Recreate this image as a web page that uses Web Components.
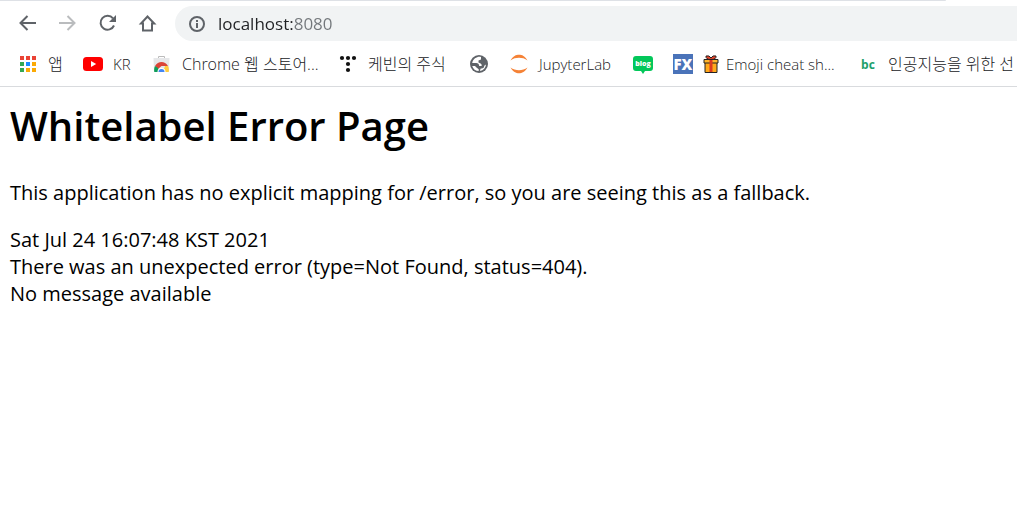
<!DOCTYPE html>
<html lang="ko">
<head>
<meta charset="utf-8">
<meta name="viewport" content="width=device-width, initial-scale=1">
<title>localhost:8080</title>
<style>
body { margin: 0; background: #fff; overflow-x: hidden; font-family: "Open Sans", "Noto Sans CJK KR", sans-serif; }
</style>
</head>
<body>
<browser-toolbar></browser-toolbar>
<bookmark-bar>
  <bookmark-item label="앱" icon="apps" lang="ko"></bookmark-item>
  <bookmark-item label="KR" icon="youtube" lang="en"></bookmark-item>
  <bookmark-item label="Chrome 웹 스토어..." icon="store" lang="ko"></bookmark-item>
  <bookmark-item label="케빈의 주식" icon="dots" lang="ko"></bookmark-item>
  <bookmark-item icon="globe"></bookmark-item>
  <bookmark-item label="JupyterLab" icon="jupyter" lang="en"></bookmark-item>
  <bookmark-item icon="blog"></bookmark-item>
  <bookmark-item icon="fx"></bookmark-item>
  <bookmark-item label="Emoji cheat sh..." icon="gift" lang="en" tight></bookmark-item>
  <bookmark-item label="인공지능을 위한 선" icon="bc" lang="ko"></bookmark-item>
</bookmark-bar>
<error-page>
  <span slot="title">Whitelabel Error Page</span>
  <span slot="summary">This application has no explicit mapping for /error, so you are seeing this as a fallback.</span>
  <div>Sat Jul 24 16:07:48 KST 2021</div>
  <div>There was an unexpected error (type=Not Found, status=404).</div>
  <div>No message available</div>
</error-page>

<script>
class BrowserToolbar extends HTMLElement {
  constructor() {
    super();
    this.attachShadow({ mode: 'open' }).innerHTML = `
<style>
:host { display: block; background: linear-gradient(#dee1e6, #dee1e6) 0 0 / 93% 1px no-repeat #fff; }
nav { display: flex; align-items: center; height: 35px; padding: 6px 0 0 16px; }
button { flex: none; width: 24px; height: 24px; margin-right: 16px; padding: 0; border: 0; background: none; color: #5f6368; }
button:disabled { color: #babcbe; }
button:last-of-type { margin-right: 15px; }
svg { display: block; }
label { flex: 1; display: flex; align-items: center; height: 35px; padding-left: 13px; gap: 12px; background: #f1f3f4; border-radius: 18px 0 0 18px; color: #5f6368; }
input { flex: 1; min-width: 0; height: 32px; padding: 0; border: 0; outline: 0; font: 17px/32px "Open Sans", sans-serif; color: #202124;
  background: linear-gradient(90deg, #202124 75px, #73777b 75px); -webkit-background-clip: text; background-clip: text; -webkit-text-fill-color: transparent; }
</style>
<nav aria-label="Navigation">
  <button aria-label="Back"><svg width="24" height="24" fill="none" stroke="currentColor" stroke-width="2"><path d="M20 11H5M11.500 4l-7 7 7 7"/></svg></button>
  <button aria-label="Forward" disabled><svg width="24" height="24" fill="none" stroke="currentColor" stroke-width="2"><path d="M3 11h15M11.500 4l7 7-7 7"/></svg></button>
  <button aria-label="Reload"><svg width="24" height="24" fill="none" stroke="currentColor" stroke-width="2"><path d="M17 6.300A7 7 0 1 0 18 13.500"/><path d="M20 3v7h-7z" fill="currentColor" stroke="none"/></svg></button>
  <button aria-label="Home"><svg width="24" height="24" fill="none" stroke="currentColor" stroke-width="2"><path d="M5 11.500h2V18.500h9V11.500h2.200L11.500 4.500z"/></svg></button>
  <label><svg width="18" height="18" fill="none" stroke="currentColor" stroke-width="2"><circle cx="9" cy="9" r="7"/><path d="M9 8v5M9 5v2"/></svg>
  <input type="text" aria-label="Address" value="localhost:8080" spellcheck="false"></label>
</nav>`;
  }
}

class BookmarkBar extends HTMLElement {
  constructor() {
    super();
    this.attachShadow({ mode: 'open' }).innerHTML = `
<style>
:host { display: grid; grid-template-columns: 65px 69px 186px 131px 40px 124px 40px 28px 157px auto; align-items: center; height: 45px; padding-left: 18px; border-bottom: 1px solid #d9dbde; overflow: hidden; }
</style><slot></slot>`;
  }
}

const dot = (x, y, c) => `<rect x="${x}" y="${y}" width="4" height="4" fill="${c}"/>`;
const ICONS = {
  apps: dot(2,2,'#ea4335')+dot(8,2,'#ea4335')+dot(14,2,'#ea4335')+dot(2,8,'#34a853')+dot(8,8,'#1a8cff')+dot(14,8,'#fbaa05')+dot(2,14,'#34a853')+dot(8,14,'#fbaa05')+dot(14,14,'#fbaa05'),
  youtube: '<rect x="0" y="3" width="20" height="14" rx="3.500" fill="#f00"/><path d="M8 7v6l5.200-3z" fill="#fff"/>',
  store: '<path d="M6.500 4V2.500h6V4" fill="none" stroke="#bbb"/><path d="M1.500 4h16l-.5 14H2z" fill="#e6e7e9"/><path d="M3 12c1.500-2.500 4-4 6.500-4s5 1.500 6.500 4H9.500L6 15z" fill="#db4437"/><path d="M3 12c-1 2-1 4-.7 6H8l-2-4z" fill="#0f9d58"/><path d="M16 12c1 2 1 4 .7 6H11l2-6z" fill="#ffcd40"/><path d="M5.500 18a4 4 0 1 1 8 0z" fill="#fff"/><path d="M6.500 18a3 3 0 1 1 6 0z" fill="#4285f4"/>',
  dots: '<g fill="#111"><circle cx="4" cy="4" r="2.100"/><circle cx="10" cy="4" r="2.100"/><circle cx="16" cy="4" r="2.100"/><circle cx="10" cy="10" r="2.100"/><circle cx="10" cy="16" r="2.100"/></g>',
  globe: '<circle cx="10" cy="10" r="9" fill="#5f6368"/><path d="M12 2.900C9 2 4 4 3.200 9h4q2.800 0 3 3h2.500q.3-2-1.500-2.800L9.500 8.500V6.500l2.500-1zM3.200 12c.8 3 3.500 5 6.500 5v-1.800L7.500 13.500 6 12zM11 17c3.500-.6 5.700-3.200 6-6.500l-1.500 1-1 2.500-3 .8z" fill="#fff"/>',
  jupyter: '<path d="M1.500 6.500C4 2 7 .8 10 .8s6 1.200 8.500 5.700C16 4.500 13 3.800 10 3.800s-6 .7-8.500 2.700zM1.500 13.500C4 18 7 19.200 10 19.200s6-1.200 8.500-5.700C16 15.500 13 16.200 10 16.200s-6-.7-8.500-2.700z" fill="#f58236"/>',
  blog: '<path d="M3 2h14q3 0 3 3v9q0 3-3 3h-5l-2 3L8 17H3q-3 0-3-3V5q0-3 3-3z" fill="#03c75a"/><text x="10" y="12" text-anchor="middle" font-family="Open Sans,sans-serif" font-size="7" font-weight="800" fill="#fff">blog</text>',
  fx: '<path d="M0 0h20v20H0z" fill="#4a73b9"/><text x="10" y="16" text-anchor="middle" font-family="Open Sans,sans-serif" font-size="15" font-weight="800" fill="#fff">FX</text>',
  gift: '<path d="M4 8h12v10.500H4z" fill="#ffa91a" stroke="#222"/><path d="M3 5.500h14V9H3z" fill="#ffb52b" stroke="#222"/><path d="M8.500 6h3v12h-3z" fill="#db3b21"/><path d="M10 5.500Q4.500 5.500 5 2q3.500-1 5 2 1.500-3 5-2 .5 3.500-5 3.500z" fill="#e8452c" stroke="#222"/>',
  bc: '<text x="10" y="15" text-anchor="middle" font-family="Open Sans,sans-serif" font-size="12" font-weight="700" fill="#20a06b">bc</text>'
};
const NAMES = { globe: 'Website', blog: 'Blog', fx: 'FX' };

class BookmarkItem extends HTMLElement {
  constructor() { super(); this.attachShadow({ mode: 'open' }); }
  connectedCallback() {
    const label = this.getAttribute('label') || '';
    const icon = this.getAttribute('icon');
    this.shadowRoot.innerHTML = `
<style>
:host { display: block; min-width: 0; }
a { display: flex; align-items: center; gap: 10px; height: 24px; color: #202124; text-decoration: none; white-space: nowrap; font-size: 15px; font-weight: 300; line-height: 24px; }
:host([lang="ko"]) a { font-size: 16px; }
:host([tight]) a { gap: 5px; }
svg { flex: none; display: block; }
</style>
<a href="#" aria-label="${label || NAMES[icon]}"><svg width="20" height="20" viewBox="0 0 20 20" aria-hidden="true">${ICONS[icon]}</svg>${label ? `<span>${label}</span>` : ''}</a>`;
  }
}

class ErrorPage extends HTMLElement {
  constructor() {
    super();
    this.attachShadow({ mode: 'open' }).innerHTML = `
<style>
:host { display: block; padding: 12px 10px; color: #000; font-size: 20px; line-height: 27px; }
h1 { margin: 0 0 26px; font-size: 40px; line-height: 54px; font-weight: 600; }
p { margin: 0 0 20px; }
</style>
<main><h1><slot name="title"></slot></h1><p><slot name="summary"></slot></p><slot></slot></main>`;
  }
}

customElements.define('browser-toolbar', BrowserToolbar);
customElements.define('bookmark-bar', BookmarkBar);
customElements.define('bookmark-item', BookmarkItem);
customElements.define('error-page', ErrorPage);
</script>
</body>
</html>
